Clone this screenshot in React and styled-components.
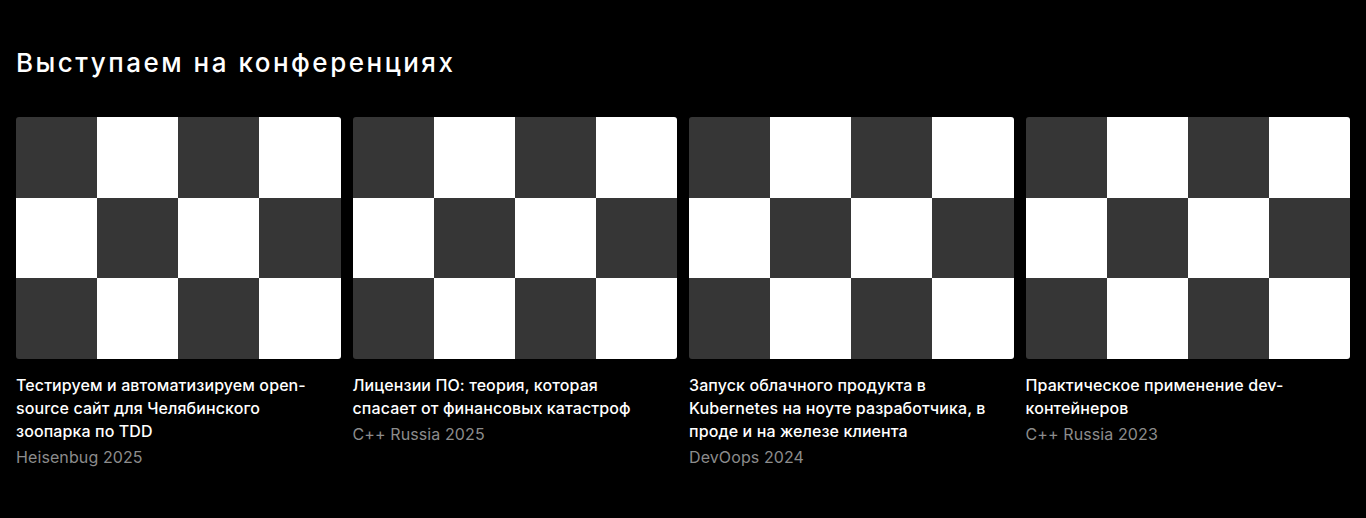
import React from 'react'
import styled, { createGlobalStyle } from 'styled-components'

const GlobalStyle = createGlobalStyle`
  html, body {
    margin: 0;
    background: #000;
  }
  body {
    font-family: Inter, "Noto Sans", sans-serif;
    color: #fff;
  }
`

const Section = styled.section`
  padding: 45px 16px 40px;
`

const Title = styled.h2`
  margin: 0 0 36px;
  font-family: Inter, "Noto Sans", sans-serif;
  font-size: 26px;
  line-height: 36px;
  font-weight: 500;
  letter-spacing: 2.5px;
  color: #fff;
`

const Grid = styled.div`
  display: grid;
  grid-template-columns: repeat(4, 1fr);
  gap: 12px;
`

const Card = styled.article`
  display: flex;
  flex-direction: column;
`

const Cover = styled.div`
  display: grid;
  grid-template-columns: repeat(4, 1fr);
  grid-template-rows: repeat(3, 1fr);
  height: 242px;
  border-radius: 3px;
  overflow: hidden;
  margin-bottom: 15px;
`

const Cell = styled.div`
  background: ${({ $dark }) => ($dark ? '#363636' : '#fff')};
`

const Text = styled.div`
  padding-right: 16px;
`

const TalkTitle = styled.h3`
  margin: 0;
  font-size: 16px;
  line-height: 23px;
  font-weight: 500;
  letter-spacing: 0.1px;
  color: #fff;
`

const Event = styled.p`
  margin: 3px 0 0;
  font-size: 16px;
  line-height: 23px;
  font-weight: 400;
  letter-spacing: 0.1px;
  color: #8c8c8c;
`

const talks = [
  { title: 'Тестируем и автоматизируем open-source сайт для Челябинского зоопарка по TDD', event: 'Heisenbug 2025' },
  { title: 'Лицензии ПО: теория, которая спасает от финансовых катастроф', event: 'C++ Russia 2025' },
  { title: 'Запуск облачного продукта в Kubernetes на ноуте разработчика, в проде и на железе клиента', event: 'DevOops 2024' },
  { title: 'Практическое применение dev-контейнеров', event: 'C++ Russia 2023' }
]

const cells = Array.from({ length: 12 }, (_, i) => (Math.floor(i / 4) + (i % 4)) % 2 === 0)

const Checker = () => (
  <Cover>
    {cells.map((dark, i) => <Cell key={i} $dark={dark} />)}
  </Cover>
)

const App = () => (
  <>
    <GlobalStyle />
    <Section>
      <Title>Выступаем на конференциях</Title>
      <Grid>
        {talks.map((t) => (
          <Card key={t.title}>
            <Checker />
            <Text>
              <TalkTitle>{t.title}</TalkTitle>
              <Event>{t.event}</Event>
            </Text>
          </Card>
        ))}
      </Grid>
    </Section>
  </>
)

export default App
